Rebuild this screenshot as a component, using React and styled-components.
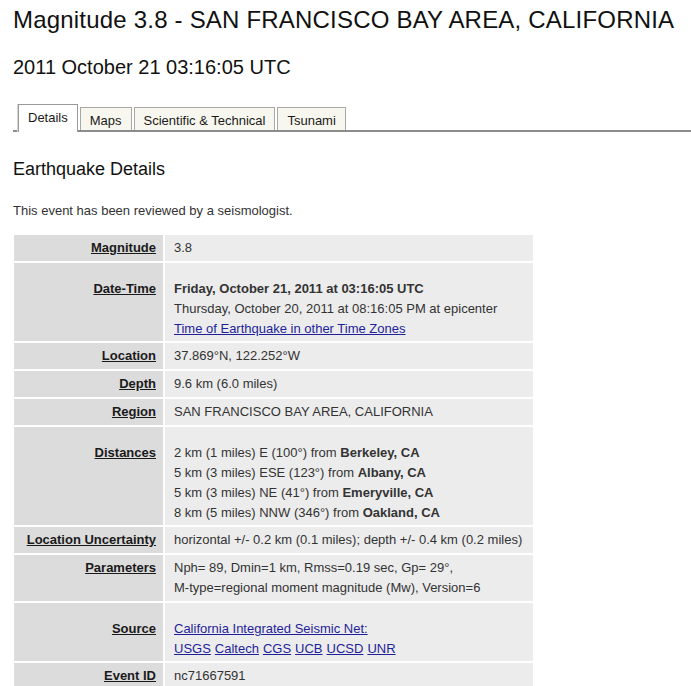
import React from "react";
import styled, { createGlobalStyle } from "styled-components";

const GlobalStyle = createGlobalStyle`
  html, body { margin: 0; padding: 0; background: #ffffff; }
  body {
    font-family: "Liberation Sans", Arial, sans-serif;
    color: #222222;
  }
`;

const Page = styled.div`
  padding: 6px 0 0 13px;
`;

const Title = styled.h1`
  margin: 0;
  font-size: 24px;
  line-height: 28px;
  letter-spacing: 0.2px;
  font-weight: normal;
  color: #111111;
`;

const Subtitle = styled.h2`
  margin: 22px 0 0;
  font-size: 20px;
  line-height: 23px;
  font-weight: normal;
  color: #111111;
`;

const TabBar = styled.div`
  display: flex;
  align-items: flex-end;
  gap: 2px;
  margin-top: 25px;
  padding-left: 5px;
  border-bottom: 2px solid #8c8c8c;
`;

const Tab = styled.div`
  font-size: 13px;
  line-height: 15px;
  color: #1a1a1a;
  border: 1px solid ${(p) => (p.$active ? "#9a9a9a" : "#a8a8a8")};
  border-bottom: none;
  background: ${(p) => (p.$active ? "#ffffff" : "#f7f7ef")};
  padding: ${(p) => (p.$active ? "5px 9px 7px" : "5px 9px 2px")};
  margin-bottom: ${(p) => (p.$active ? "-2px" : "0")};
  box-shadow: ${(p) => (p.$active ? "-1px 0 0 #d4d4d4" : "none")};
`;

const SectionHeading = styled.h3`
  margin: 27px 0 0;
  font-size: 18px;
  line-height: 21px;
  font-weight: normal;
  color: #111111;
`;

const Note = styled.p`
  margin: 23px 0 0;
  font-size: 13px;
  line-height: 15px;
  color: #333333;
`;

const DetailsGrid = styled.div`
  display: grid;
  grid-template-columns: 149px 368px;
  column-gap: 2px;
  row-gap: 2px;
  margin: 17px 0 0 1px;
  font-size: 13px;
  line-height: 20px;
`;

const LabelCell = styled.div`
  background: #dcdcdc;
  text-align: right;
  padding: ${(p) => (p.$spaced ? "16px 7px 2px 8px" : "3px 7px 3px 8px")};
  font-weight: bold;
  color: #1a1a1a;
`;

const LabelText = styled.span`
  text-decoration: underline;
`;

const ValueCell = styled.div`
  background: #ececec;
  padding: ${(p) => (p.$spaced ? "16px 8px 2px 9px" : "3px 8px 3px 9px")};
  color: #333333;
`;

const Line = styled.div``;

const Strong = styled.strong`
  font-weight: bold;
  color: #333333;
`;

const Link = styled.a`
  color: #1f1f9a;
  text-decoration: underline;
`;

const LinkRow = styled.div`
  display: flex;
  gap: 4px;
`;

const rows = [
  { label: "Magnitude", value: <Line>3.8</Line> },
  {
    label: "Date-Time",
    spaced: true,
    value: (
      <>
        <Line>
          <Strong>Friday, October 21, 2011 at 03:16:05 UTC</Strong>
        </Line>
        <Line>Thursday, October 20, 2011 at 08:16:05 PM at epicenter</Line>
        <Line>
          <Link href="#">Time of Earthquake in other Time Zones</Link>
        </Line>
      </>
    ),
  },
  { label: "Location", value: <Line>37.869°N, 122.252°W</Line> },
  { label: "Depth", value: <Line>9.6 km (6.0 miles)</Line> },
  { label: "Region", value: <Line>SAN FRANCISCO BAY AREA, CALIFORNIA</Line> },
  {
    label: "Distances",
    spaced: true,
    value: (
      <>
        <Line>
          2 km (1 miles) E (100°) from <Strong>Berkeley, CA</Strong>
        </Line>
        <Line>
          5 km (3 miles) ESE (123°) from <Strong>Albany, CA</Strong>
        </Line>
        <Line>
          5 km (3 miles) NE (41°) from <Strong>Emeryville, CA</Strong>
        </Line>
        <Line>
          8 km (5 miles) NNW (346°) from <Strong>Oakland, CA</Strong>
        </Line>
      </>
    ),
  },
  {
    label: "Location Uncertainty",
    value: (
      <Line>horizontal +/- 0.2 km (0.1 miles); depth +/- 0.4 km (0.2 miles)</Line>
    ),
  },
  {
    label: "Parameters",
    value: (
      <>
        <Line>Nph= 89, Dmin=1 km, Rmss=0.19 sec, Gp= 29°,</Line>
        <Line>M-type=regional moment magnitude (Mw), Version=6</Line>
      </>
    ),
  },
  {
    label: "Source",
    spaced: true,
    value: (
      <>
        <Line>
          <Link href="#">California Integrated Seismic Net:</Link>
        </Line>
        <LinkRow>
          {["USGS", "Caltech", "CGS", "UCB", "UCSD", "UNR"].map((s) => (
            <Link key={s} href="#">
              {s}
            </Link>
          ))}
        </LinkRow>
      </>
    ),
  },
  { label: "Event ID", value: <Line>nc71667591</Line> },
];

const tabs = ["Details", "Maps", "Scientific & Technical", "Tsunami"];

export default function App() {
  return (
    <>
      <GlobalStyle />
      <Page>
        <Title>Magnitude 3.8 - SAN FRANCISCO BAY AREA, CALIFORNIA</Title>
        <Subtitle>2011 October 21 03:16:05 UTC</Subtitle>
        <TabBar>
          {tabs.map((t, i) => (
            <Tab key={t} $active={i === 0}>
              {t}
            </Tab>
          ))}
        </TabBar>
        <SectionHeading>Earthquake Details</SectionHeading>
        <Note>This event has been reviewed by a seismologist.</Note>
        <DetailsGrid>
          {rows.map((r) => (
            <React.Fragment key={r.label}>
              <LabelCell $spaced={r.spaced}>
                <LabelText>{r.label}</LabelText>
              </LabelCell>
              <ValueCell $spaced={r.spaced}>{r.value}</ValueCell>
            </React.Fragment>
          ))}
        </DetailsGrid>
      </Page>
    </>
  );
}
